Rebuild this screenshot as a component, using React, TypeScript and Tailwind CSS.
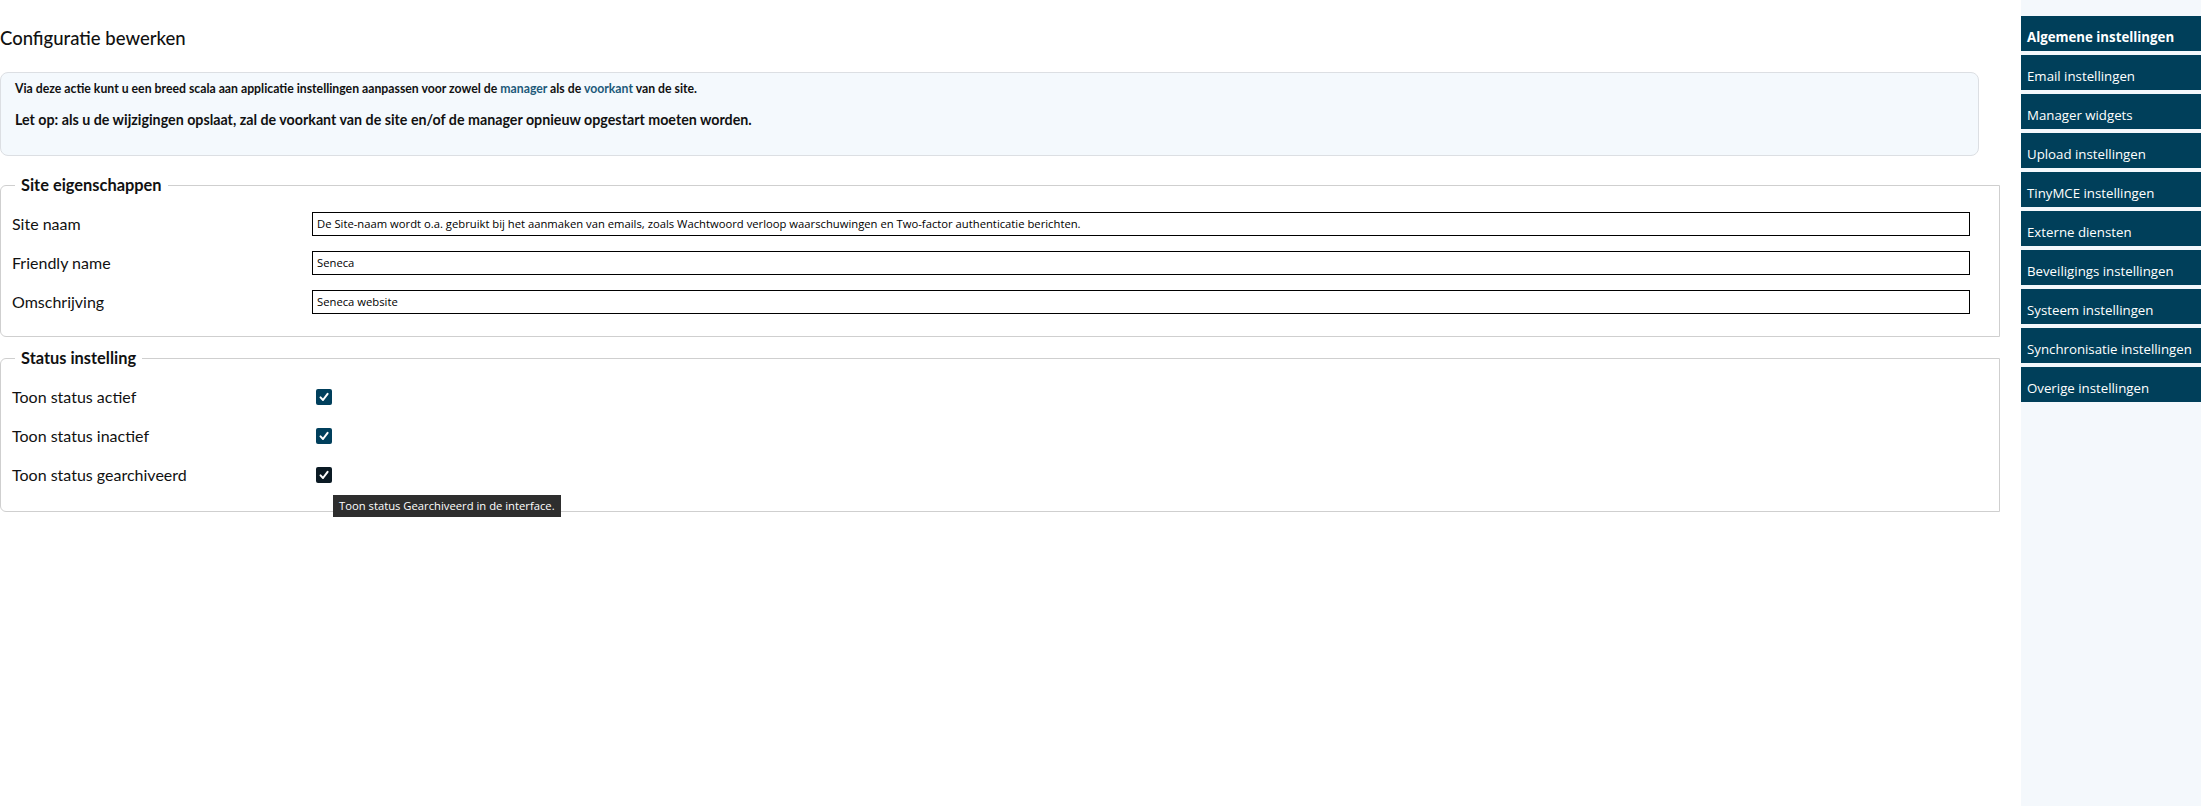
import React from "react";

const sideItems = [
  "Algemene instellingen",
  "Email instellingen",
  "Manager widgets",
  "Upload instellingen",
  "TinyMCE instellingen",
  "Externe diensten",
  "Beveiligings instellingen",
  "Systeem instellingen",
  "Synchronisatie instellingen",
  "Overige instellingen",
];

function Check({ dark }: { dark?: boolean }) {
  return (
    <div
      className={
        "w-[16px] h-[16px] rounded-[2px] flex items-center justify-center " +
        (dark ? "bg-[#0b1a24]" : "bg-[#003f5c]")
      }
    >
      <svg width="12" height="12" viewBox="0 0 12 12">
        <path d="M2.5 6.4 L5 9 L9.6 2.8" fill="none" stroke="#ffffff" strokeWidth="2" strokeLinecap="round" strokeLinejoin="round" />
      </svg>
    </div>
  );
}

function TextRow({ label, value }: { label: string; value: string }) {
  return (
    <div className="flex items-center h-[24px]">
      <div className="w-[300px] text-[16px] text-[#111]">{label}</div>
      <div className="flex-1 h-[24px] border border-black bg-white flex items-center pl-[4px] font-['Open_Sans',sans-serif] text-[11.25px] text-black overflow-hidden whitespace-nowrap">
        {value}
      </div>
    </div>
  );
}

export default function App() {
  return (
    <div className="flex min-h-screen w-full bg-white font-['Lato',sans-serif] text-[#111]">
      <main className="flex-1 pr-[21px] min-w-0">
        <h1 className="pt-[27px] text-[18.5px] leading-[23px] font-medium text-[#111]">Configuratie bewerken</h1>
        <div className="mt-[22px] mr-[21px] rounded-[8px] border border-[#dcdfe3] bg-[#f4f9fd] pl-[14px] pt-[8px] pb-[25px]">
          <p className="text-[12.25px] leading-[16px] font-bold">
            Via deze actie kunt u een breed scala aan applicatie instellingen aanpassen voor zowel de{" "}
            <span className="text-[#1d5a7a]">manager</span> als de <span className="text-[#1d5a7a]">voorkant</span> van de site.
          </p>
          <p className="mt-[13px] text-[14.25px] leading-[20px] font-bold">
            Let op: als u de wijzigingen opslaat, zal de voorkant van de site en/of de manager opnieuw opgestart moeten worden.
          </p>
        </div>

        <fieldset className="mt-[19px] border border-[#cfcfcf] rounded-l-[6px] pl-[11px] pr-[29px] pt-[17px] pb-[22px]">
          <legend className="ml-[3px] px-[6px] text-[16.4px] leading-[20px] font-bold">Site eigenschappen</legend>
          <div className="flex flex-col gap-[15px]">
            <TextRow
              label="Site naam"
              value="De Site-naam wordt o.a. gebruikt bij het aanmaken van emails, zoals Wachtwoord verloop waarschuwingen en Two-factor authenticatie berichten."
            />
            <TextRow label="Friendly name" value="Seneca" />
            <TextRow label="Omschrijving" value="Seneca website" />
          </div>
        </fieldset>

        <fieldset className="mt-[11px] border border-[#cfcfcf] rounded-l-[6px] pl-[11px] pr-[29px] pt-[17px] pb-[24px]">
          <legend className="ml-[3px] px-[6px] text-[16.4px] leading-[20px] font-bold">Status instelling</legend>
          <div className="flex flex-col gap-[15px]">
            <div className="flex items-center h-[24px]">
              <div className="w-[304px] text-[16px]">Toon status actief</div>
              <Check />
            </div>
            <div className="flex items-center h-[24px]">
              <div className="w-[304px] text-[16px]">Toon status inactief</div>
              <Check />
            </div>
            <div className="flex items-center h-[24px]">
              <div className="w-[304px] text-[16px]">Toon status gearchiveerd</div>
              <div className="relative">
                <Check dark />
                <div className="absolute left-[17px] top-[28px] z-10 h-[22px] px-[6px] bg-[#2e2e2e] text-white font-['Open_Sans',sans-serif] text-[11.25px] leading-[22px] whitespace-nowrap">
                  Toon status Gearchiveerd in de interface.
                </div>
              </div>
            </div>
          </div>
        </fieldset>
      </main>

      <aside className="w-[180px] shrink-0 bg-[#f4f8fc] pt-[16px] font-['Open_Sans',sans-serif]">
        <nav className="flex flex-col gap-[4px]">
          {sideItems.map((item, i) => (
            <div
              key={item}
              className={
                "h-[35px] bg-[#003f5a] text-white pl-[6px] pt-[13px] text-[13.25px] leading-[16px] whitespace-nowrap " +
                (i === 0 ? "font-bold" : "font-normal")
              }
            >
              {item}
            </div>
          ))}
        </nav>
      </aside>
    </div>
  );
}
